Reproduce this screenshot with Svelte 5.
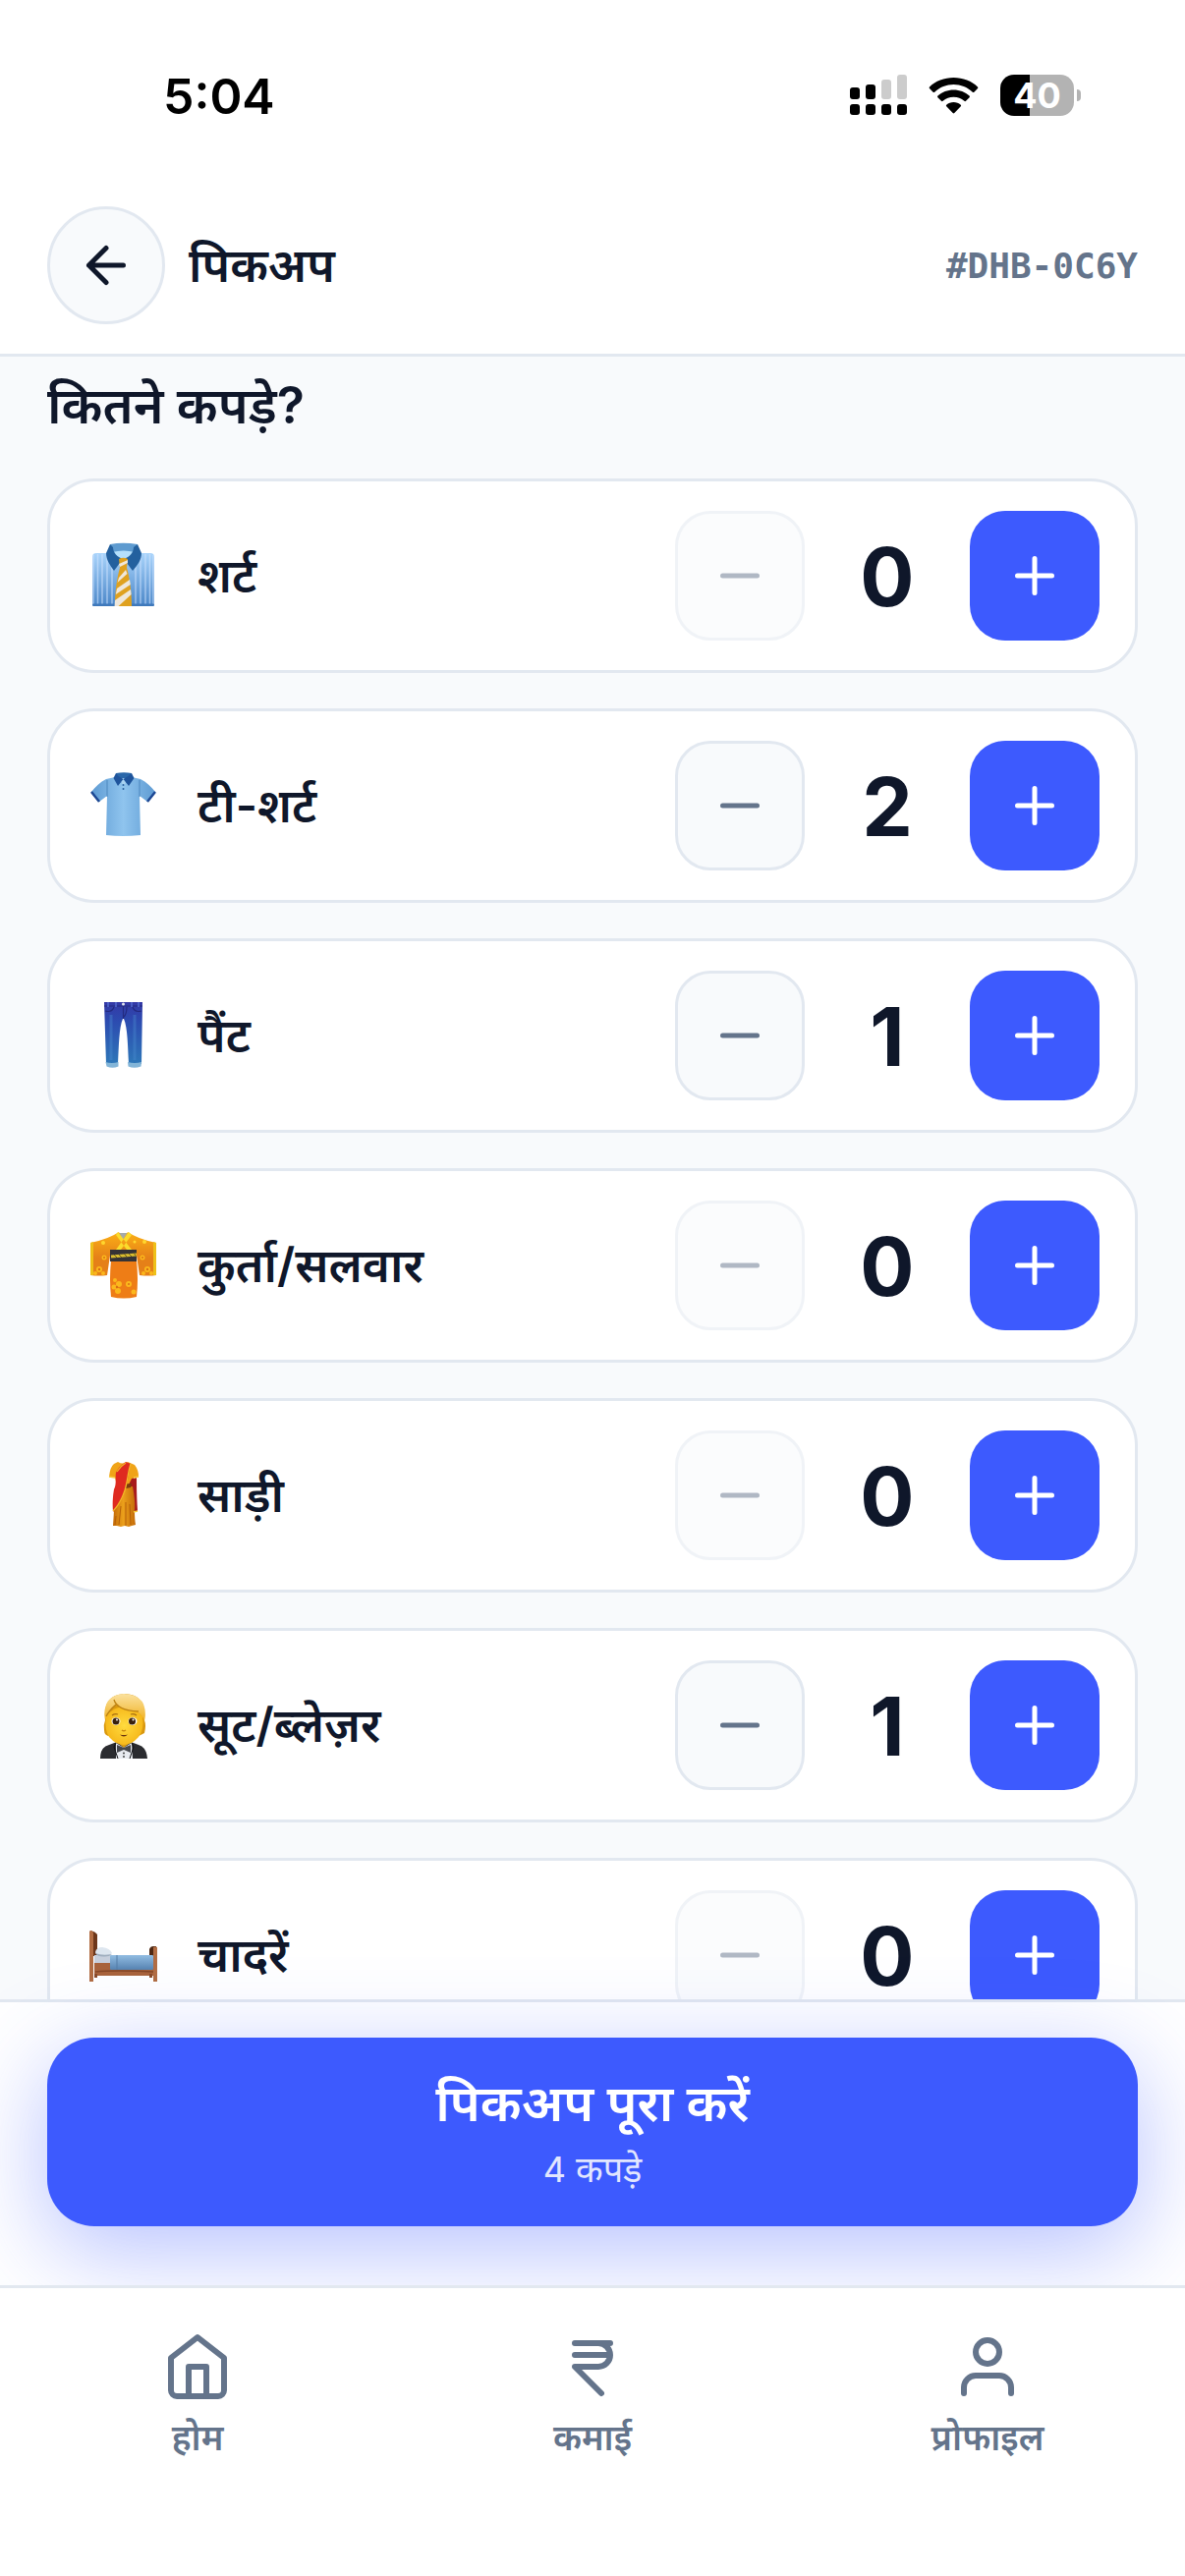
<script lang="ts">
	type Item = { id: string; name: string; count: number };

	let items = $state<Item[]>([
		{ id: 'shirt', name: 'शर्ट', count: 0 },
		{ id: 'tshirt', name: 'टी-शर्ट', count: 2 },
		{ id: 'pants', name: 'पैंट', count: 1 },
		{ id: 'kurta', name: 'कुर्ता/सलवार', count: 0 },
		{ id: 'saree', name: 'साड़ी', count: 0 },
		{ id: 'suit', name: 'सूट/ब्लेज़र', count: 1 },
		{ id: 'sheets', name: 'चादरें', count: 0 }
	]);

	let total = $derived(items.reduce((sum, item) => sum + item.count, 0));
</script>

<div class="app">
	<div class="status-bar">
		<span class="clock">5:04</span>
		<div class="status-icons">
			<svg width="58" height="42" viewBox="0 0 58 42" aria-hidden="true">
				<rect x="0" y="13" width="10" height="12" rx="3" />
				<rect x="16" y="10" width="10" height="15" rx="3" />
				<rect x="32" y="5" width="10" height="20" rx="3" fill="#ccc" />
				<rect x="48" y="0" width="10" height="25" rx="3" fill="#ccc" />
				<rect x="0" y="30" width="10" height="11" rx="3" />
				<rect x="16" y="30" width="10" height="11" rx="3" />
				<rect x="32" y="30" width="10" height="11" rx="3" />
				<rect x="48" y="30" width="10" height="11" rx="3" />
			</svg>
			<svg width="51" height="38" viewBox="0 0 51 38" aria-hidden="true">
				<path d="M25.500 1C35 1 44 4.500 50 10.500q.8.800 0 1.600l-3.600 3.600q-.8.800-1.600 0C39.600 10.800 32.800 8 25.500 8S11.400 10.800 6.200 15.700q-.8.800-1.600 0L1 12.100q-.8-.8 0-1.600C7 4.500 16 1 25.500 1z" />
				<path d="M25.500 13.500c6.200 0 11.800 2.300 16.100 6.100q.8.800 0 1.600L38 24.800q-.8.800-1.600 0a16.500 16.500 0 0 0-21.800 0q-.8.800-1.600 0l-3.600-3.600q-.8-.8 0-1.600c4.300-3.800 9.900-6.100 16.100-6.100z" />
				<path d="M25.500 26c2.800 0 5.300 1 7.300 2.700q.8.800 0 1.600l-6.500 6.700q-.8.800-1.600 0l-6.500-6.700q-.8-.8 0-1.600c2-1.700 4.500-2.700 7.300-2.700z" />
			</svg>
			<div class="battery">
				<span class="battery-body">40</span>
				<span class="battery-tip"></span>
			</div>
		</div>
	</div>

	<header class="top-bar">
		<button class="back" type="button" aria-label="वापस">
			<svg class="icon" width="60" height="60" viewBox="0 0 24 24" aria-hidden="true">
				<path d="M19 12H5M12 19l-7-7 7-7" />
			</svg>
		</button>
		<h1>पिकअप</h1>
		<span class="order-id">#DHB-0C6Y</span>
	</header>

	<main>
		<h2>कितने कपड़े?</h2>
		<ul class="items">
			{#each items as item (item.id)}
				<li class="item">
					<svg class="picture" width="78" height="78" viewBox="0 0 78 78" aria-hidden="true">
						{#if item.id === 'shirt'}
							<defs>
								<linearGradient id="shirt-body" x2="0" y2="1">
									<stop offset="0" stop-color="#a9d4fb" />
									<stop offset="1" stop-color="#4a86c8" />
								</linearGradient>
							</defs>
							<rect x="7" y="16" width="63" height="54" rx="4" fill="url(#shirt-body)" />
							<path d="M8 18v50M12.500 17v52M17 17v52M22 17v52M27 17v52M51 17v52M56 17v52M61 17v52M65.500 17v52M69 18v50" stroke="#cfe4ff" stroke-width="1.500" opacity=".6" />
							<rect x="7" y="67.500" width="63" height="2.500" rx="1" fill="#3f79bb" />
							<path d="M25 7q13-2.500 28 0l-3 10-11 6-11-6z" fill="#5e9bd0" />
							<path d="M27 15q12-3 23 0l-11 9z" fill="#b5e0fc" />
							<path d="M25 7l-4 9c0 7 4 12 8 18l9-12c-6-2-10-7-10-12zM53 7l4 9c0 7-4 12-9 18l-9-12c6-2 10-7 10-12z" fill="#23609e" />
							<path d="M34 22q4.500-2.500 9 0l-1 9c3 10 5 25 5 39H30c0-14 2-29 5-39z" fill="#dfa11f" />
							<path d="M34 27l9-4v3l-8 4zM34 41l7-8 1.500 4-10 9zM32 52l13-9 .8 5-15 10zM30 64l16-11 .6 5-13 12h-4z" fill="#efe7da" />
						{:else if item.id === 'tshirt'}
							<defs>
								<linearGradient id="tshirt-body">
									<stop offset="0" stop-color="#5e9bd3" />
									<stop offset=".5" stop-color="#8fc4ee" />
									<stop offset="1" stop-color="#5e9bd3" />
								</linearGradient>
							</defs>
							<path d="M30 10l-9 2C15 15 10 20 6 25l8 10 8-6-1 40q17 2 35 0l-1-40 8 6 8-10c-4-5-9-10-15-13l-9-2z" fill="url(#tshirt-body)" />
							<path d="M22 13v17M55 13v17" stroke="#4d87be" fill="none" />
							<path d="M6 25l8 10M71 25l-8 10" stroke="#1c4793" stroke-width="2.500" />
							<path d="M31 6q8-1.500 16 0l-2 7-6 4-7-4z" fill="#2a67a9" />
							<path d="M33 11h11l-5 8z" fill="#a9d3f2" />
							<path d="M31 6l-2.500 5L33 19l5.500-7-5-3zM47 6l2.500 5L44 19l-5.500-7 5-3z" fill="#1f549c" />
							<g fill="#285f9e"><circle cx="38.500" cy="18" r="1" /><circle cx="38.500" cy="22" r="1" /></g>
						{:else if item.id === 'pants'}
							<defs>
								<linearGradient id="pants-body" x2="0" y2="1">
									<stop offset="0" stop-color="#3438a6" />
									<stop offset=".3" stop-color="#2c4bb0" />
									<stop offset="1" stop-color="#2e77b8" />
								</linearGradient>
							</defs>
							<path d="M19 5h39l-1 63H44c-1-18-1-37-5-46h-1c-4 9-4 28-5 46H21z" fill="url(#pants-body)" />
							<path d="M19 9h39M38.500 9v13M42 10q0 7-3 10M20 14q7 2 9-4M57 14q-7 2-9-4" stroke="#232a80" fill="none" stroke-width="1.200" />
							<path d="M26 18v46M50 18v46" stroke="#4a8bd0" opacity=".4" stroke-width="3" />
							<path d="M23 5v5M31 5v5M47 5v5M54 5v5" stroke="#536bd0" stroke-width="1.500" />
							<circle cx="38.500" cy="7" r="1.500" fill="#e3e6ee" />
							<path d="M20.500 66q6 2 13 0v4.500q-6 2.500-12 0zM43 66q7 2 14 0l-.5 4.500q-7 2.500-13 0z" fill="#83b5d8" />
						{:else if item.id === 'kurta'}
							<defs>
								<linearGradient id="kurta-body" x2="0" y2="1">
									<stop offset="0" stop-color="#fbb016" />
									<stop offset=".6" stop-color="#e58018" />
								</linearGradient>
							</defs>
							<path d="M32 6h13l-2 8h-9z" fill="#a5aaa8" />
							<path d="M34 5q-10 7-29 11v33q9 1 17 0l3-20v6h27v-6l3 20q9 1 17 0V16Q53 12 43 5l-5 8z" fill="url(#kurta-body)" />
							<path d="M26 34h26q2 19 0 37-13 3-26 0-2-18 0-37z" fill="#ee7d16" />
							<path d="M5 16v33h3V15zM72 16v33h-3V15z" fill="#eec01a" />
							<path d="M33 5l14 18h-5L31 8zM44 5L31 23h5L47 8z" fill="#fbdc2c" />
							<rect x="25" y="23" width="27" height="12" fill="#343336" />
							<path d="M26 30l26-2" stroke="#d9bd2e" stroke-width="3" />
							<path d="M29 28l3 3M34 28l3 3M39 27l3 3M44 27l3 3M49 26l2 3" stroke="#6c5d1f" />
							<g fill="#fbb81c">
								<circle cx="14" cy="43" r="3" /><circle cx="10" cy="47" r="2" /><circle cx="18" cy="47" r="2" />
								<circle cx="63" cy="43" r="3" /><circle cx="59" cy="47" r="2" /><circle cx="67" cy="47" r="2" />
								<circle cx="19" cy="31" r="2.500" /><circle cx="58" cy="31" r="2.500" />
								<circle cx="30" cy="54" r="2" /><circle cx="34" cy="58" r="3" /><circle cx="29" cy="61" r="2.500" /><circle cx="33" cy="65" r="3" />
								<circle cx="44" cy="58" r="3" /><circle cx="49" cy="66" r="2.500" />
							</g>
							<g fill="#ffd62e"><circle cx="18" cy="16" r="2" /><circle cx="60" cy="15" r="2" /><circle cx="50" cy="15" r="1.500" /></g>
							<g fill="#d96f14"><circle cx="14" cy="43" r="1.200" /><circle cx="63" cy="43" r="1.200" /><circle cx="19" cy="31" r="1" /><circle cx="58" cy="31" r="1" /><circle cx="32" cy="61" r="1.200" /><circle cx="44" cy="58" r="1" /></g>
						{:else if item.id === 'saree'}
							<defs>
								<linearGradient id="saree-skirt">
									<stop offset="0" stop-color="#c46a08" />
									<stop offset=".45" stop-color="#eba01b" />
									<stop offset="1" stop-color="#c46a08" />
								</linearGradient>
							</defs>
							<path d="M33 5q5 3 10 0l7 3q4 5 4 12l-5 1-1 8H32l-2-8-6-1q1-10 5-13z" fill="#f0a418" />
							<path d="M47 22l5-1q0 20 1 34l-4 1q-4-18-5-28z" fill="#a81b1c" />
							<path d="M32 30h16q3 16 2 24 0 10 1 15l-4 1-3 1-4-1-4 1-4-1-4 0q1-14 1-17z" fill="url(#saree-skirt)" />
							<path d="M31 60l-1 9M36 50l-2 19M41 46v24M45 48l1 21" stroke="#b55f08" fill="none" />
							<path d="M32 28l15-1-1 4-14 3z" fill="#7c3a0d" />
							<path d="M41 5l5 2c-2 8-2 16-6 27-2 9-6 14-12 22q-1-12 1-23c3-6 1-13 2-17 2-5 7-9 10-11z" fill="#df2a20" />
							<path d="M46 7c-3 9-3 17-6 27-3 9-6 15-12 21M32 15q4-6 9-9" stroke="#f2ba27" stroke-width="1.300" fill="none" />
							<path d="M24 20l6 1M49 21l5-1M49 56l4-1" stroke="#f6ca3d" stroke-width="1.500" />
						{:else if item.id === 'suit'}
							<defs>
								<linearGradient id="suit-hair" x2="0" y2="1">
									<stop offset="0" stop-color="#fbe2a0" />
									<stop offset="1" stop-color="#f0b01e" />
								</linearGradient>
								<radialGradient id="suit-face">
									<stop offset="0" stop-color="#ffdb3e" />
									<stop offset="1" stop-color="#f6b91c" />
								</radialGradient>
							</defs>
							<path d="M19 44q-1-5 1-10-3-26 20-27 23 1 20 27 2 5 0 13l-6 3H25q-6 0-6-6z" fill="#d9980f" />
							<path d="M32 50h14v10l-7 6-7-6z" fill="#d99c12" />
							<path d="M15 73q0-12 9-14l8-3 7 6 7-6 8 3q8 2 9 14z" fill="#2b2c30" />
							<path d="M31 57l8 5 8-5 1 16H31z" fill="#e8ebf0" />
							<path d="M31 57l-2 4 4 12M47 57l2 4-4 12" stroke="#0f1013" fill="none" />
							<path d="M21 30q8-10 18-10t19 10q2 14-4 21-7 8-15 8t-15-8q-5-7-3-21z" fill="url(#suit-face)" />
							<path d="M20 34Q16 9 39 7q26 1 21 28-2-7-8-10-10 1-21-7-8 7-11 16z" fill="url(#suit-hair)" />
							<path d="M29 13q3 11 25 12M31 18q-7 6-10 12" stroke="#bd8212" fill="none" stroke-width="1.300" />
							<ellipse cx="31" cy="35" rx="4.500" ry="4" fill="#fff" />
							<ellipse cx="48" cy="35" rx="4.500" ry="4" fill="#fff" />
							<circle cx="31" cy="35" r="3.500" fill="#38200d" />
							<circle cx="47.500" cy="35" r="3.500" fill="#38200d" />
							<circle cx="32" cy="33.500" r="1" fill="#fff" /><circle cx="48.500" cy="33.500" r="1" fill="#fff" />
							<path d="M27 29q3-2 6-1M46 28q3-1 6 1" stroke="#a76d11" fill="none" stroke-width="1.300" />
							<path d="M37 44q2 1.500 4 0" stroke="#c98a10" fill="none" stroke-width="1.500" />
							<path d="M35 48.500q4 1 8 0-4 4-8 0z" fill="#67320e" />
							<path d="M32 59l7 3 7-3v8l-7-3-7 3z" fill="#45474c" />
							<circle cx="39" cy="67.500" r=".9" fill="#333" /><circle cx="39" cy="71" r=".9" fill="#333" />
						{:else}
							<defs>
								<linearGradient id="bed-blanket" x2="0" y2="1">
									<stop offset="0" stop-color="#92bde2" />
									<stop offset="1" stop-color="#5783b0" />
								</linearGradient>
							</defs>
							<path d="M5 14q5 1 7 4v22H7z" fill="#6d371b" />
							<path d="M65 33q1-3 4-3h3v10h-7z" fill="#4f2813" />
							<rect x="9" y="47" width="62" height="13" fill="#a9633b" />
							<path d="M10 56q20-2 59 0" stroke="#854726" fill="none" stroke-width="1.500" />
							<rect x="9" y="58" width="3" height="4" fill="#8a4b2a" /><rect x="65" y="58" width="3" height="4" fill="#8a4b2a" />
							<rect x="9" y="39" width="17" height="8" fill="#c7cfdc" />
							<path d="M10 36q1-5 7-5 8 1 10 6-2 3-9 3-8-1-8-4z" fill="#dde6ef" />
							<path d="M10 37q7 3 17 1-3 3-9 2.500-6 0-8-3.500z" fill="#9faebe" />
							<rect x="25" y="39" width="44" height="15" rx="1" fill="url(#bed-blanket)" />
							<path d="M32 39v15" stroke="#557da6" />
							<path d="M4 15q0-1 2-1 2 1 2 3v49H4zM69 31q2-1 4 0v35h-4z" fill="#b26d43" />
						{/if}
					</svg>
					<span class="name" id="name-{item.id}">{item.name}</span>
					<div class="stepper" role="group" aria-labelledby="name-{item.id}">
						<button class="step minus" type="button" aria-label="घटाएँ" disabled={item.count === 0} onclick={() => item.count--}>
							<svg class="icon" width="60" height="60" viewBox="0 0 24 24" aria-hidden="true">
								<path d="M5 12h14" />
							</svg>
						</button>
						<output class="count">{item.count}</output>
						<button class="step plus" type="button" aria-label="बढ़ाएँ" onclick={() => item.count++}>
							<svg class="icon" width="60" height="60" viewBox="0 0 24 24" aria-hidden="true">
								<path d="M12 5v14M5 12h14" />
							</svg>
						</button>
					</div>
				</li>
			{/each}
		</ul>
	</main>

	<div class="action-bar">
		<button class="complete" type="button">
			<span class="complete-title">पिकअप पूरा करें</span>
			<span class="complete-total">{total} कपड़े</span>
		</button>
	</div>

	<nav class="tabs">
		<a class="tab" href="#home">
			<svg class="icon" width="72" height="72" viewBox="0 0 24 24" aria-hidden="true">
				<path d="M3 9l9-7 9 7v11a2 2 0 0 1-2 2H5a2 2 0 0 1-2-2z" />
				<path d="M9 22V12h6v10" />
			</svg>
			<span>होम</span>
		</a>
		<a class="tab" href="#earnings">
			<svg class="icon" width="72" height="72" viewBox="0 0 24 24" aria-hidden="true">
				<path d="M6 4h12M6 8h12M14 4a4 4 0 0 1 0 8H6l9 9" />
			</svg>
			<span>कमाई</span>
		</a>
		<a class="tab" href="#profile">
			<svg class="icon" width="72" height="72" viewBox="0 0 24 24" aria-hidden="true">
				<path d="M20 21v-2a4 4 0 0 0-4-4H8a4 4 0 0 0-4 4v2" />
				<circle cx="12" cy="7" r="4" />
			</svg>
			<span>प्रोफाइल</span>
		</a>
	</nav>
</div>

<style>
	:global(body) {
		margin: 0;
	}

	.app {
		--ink: #0f172a;
		--muted: #64748b;
		--line: #e2e8f0;
		--surface: #f8fafc;
		--brand: #3d5afe;
		display: flex;
		flex-direction: column;
		height: 100vh;
		background: #fff;
		color: var(--ink);
		font-family: Inter, 'Noto Sans Devanagari', 'Noto Sans', sans-serif;
	}

	button {
		margin: 0;
		padding: 0;
		font: inherit;
		cursor: pointer;
	}

	.icon {
		display: block;
		fill: none;
		stroke: currentColor;
		stroke-width: 2;
		stroke-linecap: round;
		stroke-linejoin: round;
	}

	.status-bar {
		display: flex;
		align-items: flex-start;
		justify-content: space-between;
		box-sizing: border-box;
		height: 180px;
		padding: 68px 106px 0 166px;
		color: #000;
	}

	.clock {
		font-size: 50px;
		font-weight: 600;
	}

	.status-icons {
		display: flex;
		align-items: center;
		gap: 22px;
		padding-top: 8px;
	}

	.battery {
		display: flex;
		align-items: center;
		gap: 3px;
	}

	.battery-body {
		width: 75px;
		height: 42px;
		border-radius: 14px;
		background: linear-gradient(90deg, #000 40%, #b3b3b3 40%);
		color: #fff;
		font-size: 36px;
		font-weight: 700;
		line-height: 42px;
		text-align: center;
	}

	.battery-tip {
		width: 4px;
		height: 12px;
		border-radius: 0 4px 4px 0;
		background: #b3b3b3;
	}

	.top-bar {
		display: flex;
		align-items: center;
		gap: 24px;
		padding: 30px 48px;
		border-bottom: 3px solid var(--line);
	}

	.back {
		display: grid;
		place-items: center;
		width: 120px;
		height: 120px;
		border: 3px solid var(--line);
		border-radius: 50%;
		background: var(--surface);
		color: var(--ink);
	}

	h1 {
		flex: 1;
		margin: 0;
		font-size: 48px;
		font-weight: 600;
		line-height: 72px;
	}

	.order-id {
		color: var(--muted);
		font-family: 'DejaVu Sans Mono', monospace;
		font-size: 36px;
		font-weight: 700;
	}

	main {
		flex: 1;
		min-height: 0;
		overflow: hidden;
		padding: 12px 48px 0;
		background: var(--surface);
	}

	h2 {
		margin: 0 0 36px;
		font-size: 52px;
		font-weight: 600;
		line-height: 76px;
	}

	.items {
		display: flex;
		flex-direction: column;
		gap: 36px;
		margin: 0;
		padding: 0;
		list-style: none;
	}

	.item {
		display: flex;
		align-items: center;
		gap: 36px;
		padding: 30px 36px;
		border: 3px solid var(--line);
		border-radius: 48px;
		background: #fff;
	}

	.picture {
		flex: none;
	}

	.name {
		flex: 1;
		font-size: 48px;
		font-weight: 600;
		line-height: 72px;
	}

	.stepper {
		display: flex;
		align-items: center;
		gap: 24px;
	}

	.step {
		display: grid;
		place-items: center;
		box-sizing: border-box;
		width: 132px;
		height: 132px;
		border-radius: 36px;
	}

	.minus {
		border: 3px solid var(--line);
		background: var(--surface);
		color: var(--muted);
	}

	.minus:disabled {
		opacity: 0.5;
		cursor: default;
	}

	.plus {
		border: 0;
		background: var(--brand);
		color: #fff;
	}

	.count {
		width: 120px;
		padding-top: 4px;
		font-size: 82px;
		font-weight: 700;
		line-height: 76px;
		text-align: center;
	}

	.action-bar {
		position: relative;
		z-index: 1;
		padding: 36px 48px 60px;
		border-top: 3px solid var(--line);
		background: #fff;
	}

	.complete {
		display: flex;
		flex-direction: column;
		align-items: center;
		justify-content: center;
		width: 100%;
		height: 192px;
		border: 0;
		border-radius: 48px;
		background: var(--brand);
		box-shadow: 0 24px 96px rgba(61, 90, 254, 0.38);
		color: #fff;
	}

	.complete-title {
		font-size: 52px;
		font-weight: 600;
		line-height: 76px;
	}

	.complete-total {
		font-size: 36px;
		line-height: 58px;
		opacity: 0.85;
	}

	.tabs {
		position: relative;
		z-index: 2;
		display: grid;
		grid-template-columns: repeat(3, 1fr);
		padding: 44px 0 114px;
		border-top: 3px solid var(--line);
		background: #fff;
	}

	.tab {
		display: flex;
		flex-direction: column;
		align-items: center;
		gap: 10px;
		color: var(--muted);
		font-size: 36px;
		font-weight: 600;
		line-height: 53px;
		text-decoration: none;
	}
</style>
